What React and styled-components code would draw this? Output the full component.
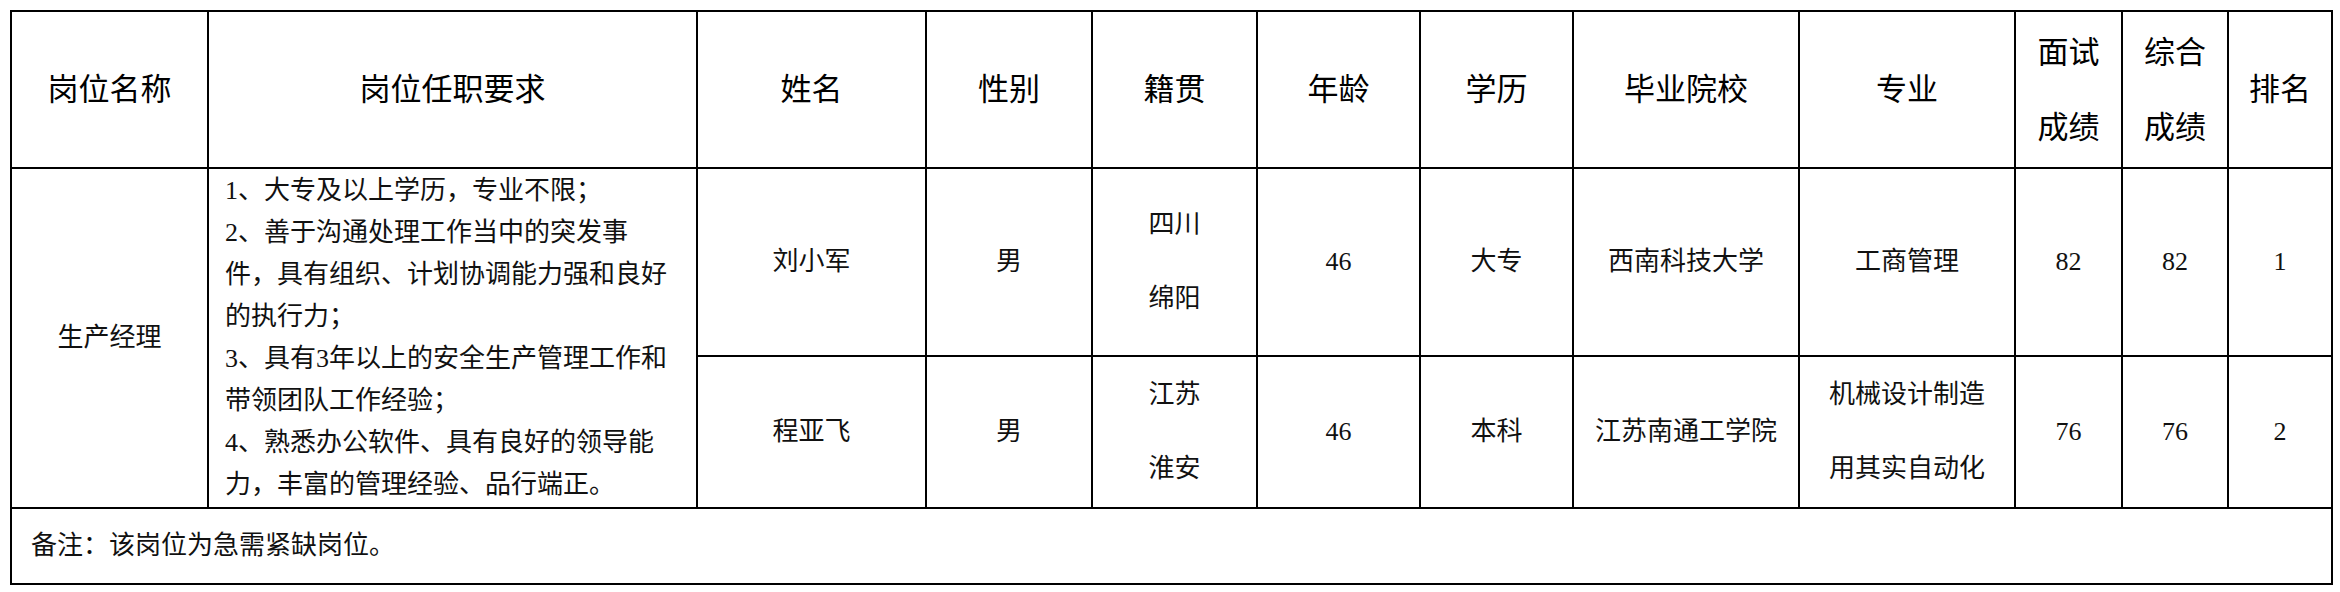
import React from 'react';
import styled, { createGlobalStyle } from 'styled-components';

const Global = createGlobalStyle`
  html, body { margin: 0; padding: 0; background: #fff; }
  body {
    font-family: "Liberation Serif", "Noto Sans CJK SC", serif;
    color: #000;
  }
`;

const Page = styled.div`
  padding: 10px 0 0 10px;
`;

const Table = styled.table`
  border-collapse: collapse;
  table-layout: fixed;
  width: 2322px;
`;

const Row = styled.tr`
  height: ${(p) => p.$h}px;
`;

const HeadCell = styled.th`
  border: 2px solid #000;
  padding: 0;
  font-weight: 400;
  font-size: 31px;
  line-height: 75px;
  text-align: center;
  vertical-align: middle;
  color: #000;
`;

const Cell = styled.td`
  border: 2px solid #000;
  padding: 0;
  font-size: 26px;
  line-height: 74px;
  text-align: center;
  vertical-align: middle;
  color: #111;
`;

const ReqCell = styled.td`
  border: 2px solid #000;
  padding: 0 0 0 16px;
  font-size: 26px;
  line-height: 42px;
  text-align: left;
  vertical-align: middle;
  color: #111;
`;

const Line = styled.div`
  white-space: nowrap;
`;

const NoteCell = styled.td`
  border: 2px solid #000;
  padding: 0 0 0 19px;
  font-size: 26px;
  line-height: 40px;
  text-align: left;
  vertical-align: middle;
  color: #111;
`;

const cols = [197, 489, 229, 166, 165, 163, 153, 226, 216, 107, 106, 104];

const headers = [
  ['岗位名称'],
  ['岗位任职要求'],
  ['姓名'],
  ['性别'],
  ['籍贯'],
  ['年龄'],
  ['学历'],
  ['毕业院校'],
  ['专业'],
  ['面试', '成绩'],
  ['综合', '成绩'],
  ['排名'],
];

const requirements = [
  '1、大专及以上学历，专业不限；',
  '2、善于沟通处理工作当中的突发事',
  '件，具有组织、计划协调能力强和良好',
  '的执行力；',
  '3、具有3年以上的安全生产管理工作和',
  '带领团队工作经验；',
  '4、熟悉办公软件、具有良好的领导能',
  '力，丰富的管理经验、品行端正。',
];

const candidates = [
  {
    h: 188,
    name: '刘小军',
    sex: '男',
    origin: ['四川', '绵阳'],
    age: '46',
    edu: '大专',
    school: '西南科技大学',
    major: ['工商管理'],
    interview: '82',
    total: '82',
    rank: '1',
  },
  {
    h: 152,
    name: '程亚飞',
    sex: '男',
    origin: ['江苏', '淮安'],
    age: '46',
    edu: '本科',
    school: '江苏南通工学院',
    major: ['机械设计制造', '用其实自动化'],
    interview: '76',
    total: '76',
    rank: '2',
  },
];

const Lines = ({ items }) =>
  items.map((t, i) => (
    <React.Fragment key={i}>
      {i > 0 && <br />}
      {t}
    </React.Fragment>
  ));

export default function App() {
  return (
    <Page>
      <Global />
      <Table>
        <colgroup>
          {cols.map((w, i) => (
            <col key={i} style={{ width: w }} />
          ))}
        </colgroup>
        <thead>
          <Row $h={157}>
            {headers.map((h, i) => (
              <HeadCell key={i}>
                <Lines items={h} />
              </HeadCell>
            ))}
          </Row>
        </thead>
        <tbody>
          {candidates.map((c, i) => (
            <Row key={c.name} $h={c.h}>
              {i === 0 && (
                <>
                  <Cell rowSpan={2}>生产经理</Cell>
                  <ReqCell rowSpan={2}>
                    {requirements.map((r) => (
                      <Line key={r}>{r}</Line>
                    ))}
                  </ReqCell>
                </>
              )}
              <Cell>{c.name}</Cell>
              <Cell>{c.sex}</Cell>
              <Cell>
                <Lines items={c.origin} />
              </Cell>
              <Cell>{c.age}</Cell>
              <Cell>{c.edu}</Cell>
              <Cell>{c.school}</Cell>
              <Cell>
                <Lines items={c.major} />
              </Cell>
              <Cell>{c.interview}</Cell>
              <Cell>{c.total}</Cell>
              <Cell>{c.rank}</Cell>
            </Row>
          ))}
          <Row $h={76}>
            <NoteCell colSpan={12}>备注：该岗位为急需紧缺岗位。</NoteCell>
          </Row>
        </tbody>
      </Table>
    </Page>
  );
}
